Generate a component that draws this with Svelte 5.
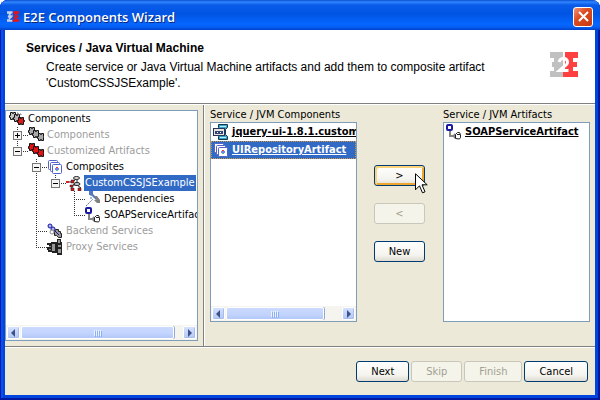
<script>
  const tree = [
    { label: 'Components', icon: 'root', cells: [] },
    { label: 'Components', icon: 'grayBlocks', cells: ['plus'], muted: true },
    { label: 'Customized Artifacts', icon: 'redBlocks', cells: ['minusEnd'], muted: true },
    { label: 'Composites', icon: 'composites', cells: ['none', 'minus'] },
    { label: 'CustomCSSJSExample', icon: 'custom', cells: ['none', 'line', 'minusEnd'], selected: true },
    { label: 'Dependencies', icon: 'deps', cells: ['none', 'line', 'none', 'tee'] },
    { label: 'SOAPServiceArtifact', icon: 'soap', cells: ['none', 'line', 'none', 'end'] },
    { label: 'Backend Services', icon: 'backend', cells: ['none', 'tee'], muted: true },
    { label: 'Proxy Services', icon: 'proxy', cells: ['none', 'end'], muted: true }
  ];
  const components = [
    { label: 'jquery-ui-1.8.1.custom', icon: 'archive' },
    { label: 'UIRepositoryArtifact', icon: 'composites', selected: true }
  ];
  const artifacts = [{ label: 'SOAPServiceArtifact', icon: 'soap' }];
  const blocks = [[1, 1], [5, 4], [10, 7]];
</script>

{#snippet block(x, y, fill)}
  <path d="M{x} {y}h2v1h1v-1h2v3h1v1h-1v3h-2v-1h-1v1h-2v-2h-1v-2h1z" {fill} stroke="#111" />
{/snippet}

{#snippet logo(left, right, mid)}
  <path fill={left} d="M0 0h13v25H0v-6h4v-4H2v-5h2V6H0z" />
  <path fill={right} d="M15 0h13v6h-5v4h4v5h-4v4h5v6H13v-8h2z" />
  <path fill="none" stroke={mid} stroke-width="3" d="M9 10Q10 6.500 13.500 6.500q4 0 4 4 0 2-4 4.500l-4 3.500h9" />
{/snippet}

{#snippet icon(name)}
  <svg class="icon" width="16" height="16" viewBox="0 0 16 16" aria-hidden="true">
    {#if name === 'root'}
      {@render block(1.5, 1.5, '#c8c8c8')}
      {@render block(5.5, 3.5, '#b4b4b4')}
      {@render block(9.5, 6.5, '#e01818')}
      <path d="M8 2h1v1h1v1M11 3h1v1" stroke="#777" fill="none" />
    {:else if name === 'grayBlocks' || name === 'redBlocks'}
      {#each blocks as [x, y]}
        {@render block(x + 0.5, y - 0.5, name === 'redBlocks' ? '#e81010' : '#aaa')}
      {/each}
    {:else if name === 'composites'}
      <g fill="#fff" stroke="#5560c8">
        <rect x="1.5" y="1.5" width="9" height="9" rx="1" />
        <rect x="3.5" y="3.5" width="9" height="9" rx="1" />
        <rect x="5.5" y="5.5" width="9" height="9" rx="1" />
      </g>
      <path fill="#e04040" d="M9 8h2v1H9z" /><path fill="#4cc099" d="M9 11h2v1H9z" /><path fill="#7684e8" d="M8 9h4v2H8z" />
    {:else if name === 'custom'}
      <path d="M3 7h4M8 6l3-4M11 4v6M8 9l-3 5M11 10l4 3M8 10h3" stroke="#222" fill="none" />
      <path d="M0 6h3v2H0z" fill="#e02020" />
      <ellipse cx="10.500" cy="3" rx="3" ry="1.500" fill="#ddd" stroke="#222" />
      <ellipse cx="11" cy="9" rx="3" ry="1.500" fill="#ccc" stroke="#222" />
      <path d="M5 5h3v3H5zM4 10h3v2H4zM5 13h3v3H5zM12 13h3v3h-3z" fill="#d01818" stroke="#222" stroke-width=".5" />
    {:else if name === 'deps'}
      <path d="M1 15l7-7M6 3v5" stroke="#5274ad" stroke-dasharray="2 1" fill="none" />
      <path d="M4 0h4v3l5 5-2 1-5-5H4z" fill="#5378bd" />
      <path d="M9 9h3l-3-4h3l3 4v3h-3z" fill="#808080" />
    {:else if name === 'soap'}
      <path d="M4 6v6h6M8 10l2 2-2 2" stroke="#858585" stroke-width="2" fill="none" />
      <rect x="1" y="1" width="5" height="5" rx="1" fill="#fff" stroke="#1818a0" stroke-width="2" />
      <path d="M9.500 14.500v-4l2-2h2l1 2v3l-1 1.500z" fill="#fff" stroke="#222" />
      <path d="M11 10.500h3" stroke="#222" />
    {:else if name === 'backend'}
      <circle cx="3" cy="3" r="2" fill="#a9b1f8" stroke="#171799" />
      <circle cx="6" cy="6" r="2" fill="#a9b1f8" stroke="#171799" />
      <circle cx="5" cy="9" r="2" fill="#fff" stroke="#888" />
      <path d="M8.500 6.500h3v2h2v2h1v4h-3l-2-2h-2v-3z" fill="#999" stroke="#222" />
      <path d="M8 8l4 4" stroke="#171799" />
    {:else if name === 'proxy'}
      <path d="M0 4h4V3h6V0h4v3h1v13h-5v-2H5v-1H1v-2H0V8h2V6H0z" fill="#222" />
      <path d="M5 5h3v7H5zM11 1h2v3h-2zM11 6h3v2h-3zM11 10h3v4h-3z" fill="#999" />
      <path d="M2 7h2v1H2zM2 10h2v1H2z" fill="#888" />
    {:else if name === 'archive'}
      <path d="M5.500.5h9v3l-2 2v5l2 2v3h-9v-3l2-2v-5l-2-2z" fill="#38a3c9" stroke="#11384c" />
      <path d="M7 2h6v1H7zM7 13h6v1H7z" fill="#b8f0fc" />
      <path d="M0 4h12v8H0z" fill="#26345c" /><path d="M1 5h10v6H1z" fill="#e6e4dc" />
      <path d="M2 7h8v3H2z" fill="#314477" /><path d="M4 8h1v1H4zM7 8h1v1H7z" fill="#fff" />
    {/if}
  </svg>
{/snippet}

{#snippet guide(kind)}
  <svg class="guide" width="19" height="16" viewBox="0 0 19 16" aria-hidden="true">
    {#if kind !== 'none'}
      <path
        d={kind === 'end' || kind === 'minusEnd' ? 'M8.5 0v8' : 'M8.5 0v16'}
        stroke="#333" stroke-dasharray="1 1" />
    {/if}
    {#if kind !== 'none' && kind !== 'line'}
      <path d="M8 8.5h11" stroke="#333" stroke-dasharray="1 1" />
    {/if}
    {#if kind.startsWith('minus') || kind === 'plus'}
      <rect x="4.5" y="4.5" width="8" height="8" fill="#f6f5f1" stroke="#777" />
      <path d="M6 8.5h5" stroke="#000" />
      {#if kind === 'plus'}<path d="M8.5 6v5" stroke="#000" />{/if}
    {/if}
  </svg>
{/snippet}

{#snippet scrollbar(share)}
  <div class="scrollbar">
    <button type="button" class="arrow" aria-label="Scroll left">
      <svg width="7" height="8" viewBox="0 0 7 8"><path d="M5 0v8L1 4z" fill="#3d5387" /></svg>
    </button>
    <div class="track">
      <div class="thumb" style:width="{share}%"><i></i><i></i><i></i><i></i></div>
    </div>
    <button type="button" class="arrow" aria-label="Scroll right">
      <svg width="7" height="8" viewBox="0 0 7 8"><path d="M2 0v8l4-4z" fill="#3d5387" /></svg>
    </button>
  </div>
{/snippet}

{#snippet list(id, title, items, scroll)}
  <section class="column">
    <h2 {id}>{title}</h2>
    <div class="box">
      <ul class="items" role="listbox" aria-labelledby={id}>
        {#each items as item}
          <li role="option" aria-selected={!!item.selected} class:selected={item.selected}>
            {@render icon(item.icon)}<span>{item.label}</span>
          </li>
        {/each}
      </ul>
      {#if scroll}{@render scrollbar(scroll)}{/if}
    </div>
  </section>
{/snippet}

<div class="window">
  <div class="titlebar">
    <svg width="12" height="11" viewBox="0 0 28 25" aria-hidden="true">{@render logo('#c3d3ee', '#f01010', '#0a55e0')}</svg>
    <h1>E2E Components Wizard</h1>
    <button type="button" class="close" aria-label="Close">
      <svg width="11" height="11" viewBox="0 0 11 11"><path d="M1 1l9 9M10 1l-9 9" stroke="#fff" stroke-width="2" /></svg>
    </button>
  </div>

  <div class="client">
    <header>
      <div>
        <h2>Services / Java Virtual Machine</h2>
        <p>Create service or Java Virtual Machine artifacts and add them to composite artifact 'CustomCSSJSExample'.</p>
      </div>
      <svg width="28" height="25" viewBox="0 0 28 25" aria-hidden="true">{@render logo('#c0c0c0', '#ff4040', '#fff')}</svg>
    </header>

    <main>
      <div class="side">
        <div class="box">
          <ul class="tree" role="tree" aria-label="Components">
            {#each tree as node}
              <li role="treeitem" aria-selected={!!node.selected} aria-level={node.cells.length + 1} class:muted={node.muted} class:selected={node.selected}>
                {#each node.cells as cell}{@render guide(cell)}{/each}
                {@render icon(node.icon)}<span>{node.label}</span>
              </li>
            {/each}
          </ul>
          {@render scrollbar(95)}
        </div>
      </div>

      <div class="transfer">
        {@render list('available', 'Service / JVM Components', components, 85)}
        <div class="actions">
          <div class="hovered">
            <button type="button" class="btn hot">&gt;</button>
            <svg class="pointer" width="13" height="21" viewBox="0 0 13 21" aria-hidden="true">
              <path d="M.5.8v16l4-4 3 7 2.500-1-3-7h5.200z" fill="#fff" stroke="#000" />
            </svg>
          </div>
          <button type="button" class="btn" disabled>&lt;</button>
          <button type="button" class="btn">New</button>
        </div>
        {@render list('chosen', 'Service / JVM Artifacts', artifacts, 0)}
      </div>
    </main>

    <footer>
      <button type="button" class="btn">Next</button>
      <button type="button" class="btn" disabled>Skip</button>
      <button type="button" class="btn" disabled>Finish</button>
      <button type="button" class="btn">Cancel</button>
    </footer>
  </div>
</div>

<style>
  :global(body) { margin: 0; background: #fff; }
  .window, .window * { box-sizing: border-box; }
  .window {
    display: flex;
    flex-direction: column;
    min-height: 100vh;
    padding: 0 5px 5px;
    border-radius: 8px 8px 0 0;
    background: #0045dc;
    box-shadow: inset 1px 0 #0019b8, inset -2px -2px #0019a0, inset 3px 0 #0a50e6;
    font: 11px/16px "DejaVu Sans Condensed", "Noto Sans", sans-serif;
    color: #000;
  }
  h1, h2, p, ul { margin: 0; padding: 0; }
  ul { list-style: none; }
  svg { display: block; flex: none; }

  .titlebar {
    display: flex;
    align-items: center;
    height: 30px;
    margin: 0 -5px;
    padding: 3px 7px 0;
    border-radius: 8px 8px 0 0;
    background: linear-gradient(#0a4ed0 0, #2f86ff 2px, #0a5be8 5px, #0054e3 14px, #0566ff 24px, #0560f5 27px, #0040c8 30px);
  }
  .titlebar h1 {
    flex: 1;
    margin-left: 4px;
    color: #fff;
    font: 600 13px/20px "Open Sans", "Noto Sans", sans-serif;
    text-shadow: 1px 1px #0a2a80;
  }
  .close {
    display: grid;
    place-items: center;
    width: 20px;
    height: 20px;
    padding: 0;
    border: 1px solid #fff;
    border-radius: 3px;
    background: linear-gradient(135deg, #f0957a, #dc4c22 40%, #c63a10);
  }

  .client { flex: 1; display: flex; flex-direction: column; background: #ece9d8; }
  header {
    display: flex;
    justify-content: space-between;
    align-items: flex-start;
    height: 74px;
    padding: 9px 17px 0 21px;
    border-bottom: 1px solid #808080;
    background: #fff;
    font: 12px/16px "Liberation Sans", Arial, sans-serif;
  }
  header h2 { font-size: 12px; line-height: 18px; }
  header p { margin: 2px 40px 0 20px; }
  header svg { margin-top: 13px; }

  main { flex: 1; display: grid; grid-template-columns: 199px 1fr; border-top: 1px solid #fff; }
  .side { display: flex; min-width: 0; padding: 5px 5px 5px 0; border-right: 1px solid #808080; }
  .box {
    flex: 1;
    display: flex;
    flex-direction: column;
    min-width: 0;
    border: 1px solid #7f9db9;
    background: #fff;
  }
  .tree { flex: 1; overflow: hidden; padding-left: 3px; }
  .tree li { display: flex; height: 16px; white-space: nowrap; }
  .tree span { margin-left: 2px; padding: 0 1px; }
  .muted { color: #9c9c9c; }
  .tree .selected span { background: #316ac5; color: #fff; }

  .transfer {
    display: grid;
    grid-template-columns: 1fr 86px 1fr;
    min-width: 0;
    padding: 2px 5px 24px;
    border-left: 1px solid #fff;
  }
  .column { display: flex; flex-direction: column; min-width: 0; }
  .column h2 { font-size: 11px; font-weight: normal; line-height: 15px; white-space: nowrap; }
  .items { flex: 1; }
  .items li {
    display: flex;
    align-items: center;
    height: 18px;
    padding-left: 2px;
    overflow: hidden;
    font-weight: bold;
    white-space: nowrap;
  }
  .items span { margin-left: 3px; text-decoration: underline; }
  .items .selected { background: #316ac5; color: #fff; outline: 1px dotted #ce953a; outline-offset: -1px; }

  .scrollbar { display: flex; height: 15px; padding: 1px; background: #f5f4ee; }
  .arrow {
    display: grid;
    place-items: center;
    width: 13px;
    padding: 0;
    border: 1px solid #fff;
    border-radius: 2px;
    background: linear-gradient(#d4e0ff, #b4c8f6);
    box-shadow: inset -1px -1px #a9bdeb;
  }
  .track { flex: 1; padding: 0 1px; }
  .thumb {
    display: flex;
    align-items: center;
    justify-content: center;
    gap: 1px;
    height: 100%;
    border: 1px solid #fff;
    border-radius: 2px;
    background: linear-gradient(#cbdafe, #c2d3fd 60%, #b3c8f8);
    box-shadow: 1px 0 #90a9d8;
  }
  .thumb i { width: 1px; height: 6px; background: #eef4fe; box-shadow: 1px 1px #8cb0f8; }

  .actions { display: flex; flex-direction: column; gap: 17px; padding: 58px 0 0 17px; }
  .hovered { position: relative; }
  .pointer { position: absolute; left: 41px; top: 8px; }
  .btn {
    height: 21px;
    padding: 0 11px;
    border: 1px solid #003c74;
    border-radius: 3px;
    background: linear-gradient(#fff, #f4f3ee 70%, #dedbd0);
    color: #000;
    font: inherit;
    line-height: 18px;
  }
  .actions .btn { display: block; width: 51px; padding: 0; }
  .btn.hot { box-shadow: inset 2px 2px #fcd27a, inset -2px -2px #f0a52c; }
  .btn:disabled { border-color: #c9c7ba; background: #f5f4ea; color: #a1a192; }

  footer {
    display: flex;
    justify-content: flex-end;
    gap: 2px;
    height: 49px;
    padding: 14px 7px 0;
    border-top: 1px solid #808080;
    box-shadow: inset 0 1px #fff;
  }
  footer .btn { min-width: 50px; padding: 0 14px; }
</style>
